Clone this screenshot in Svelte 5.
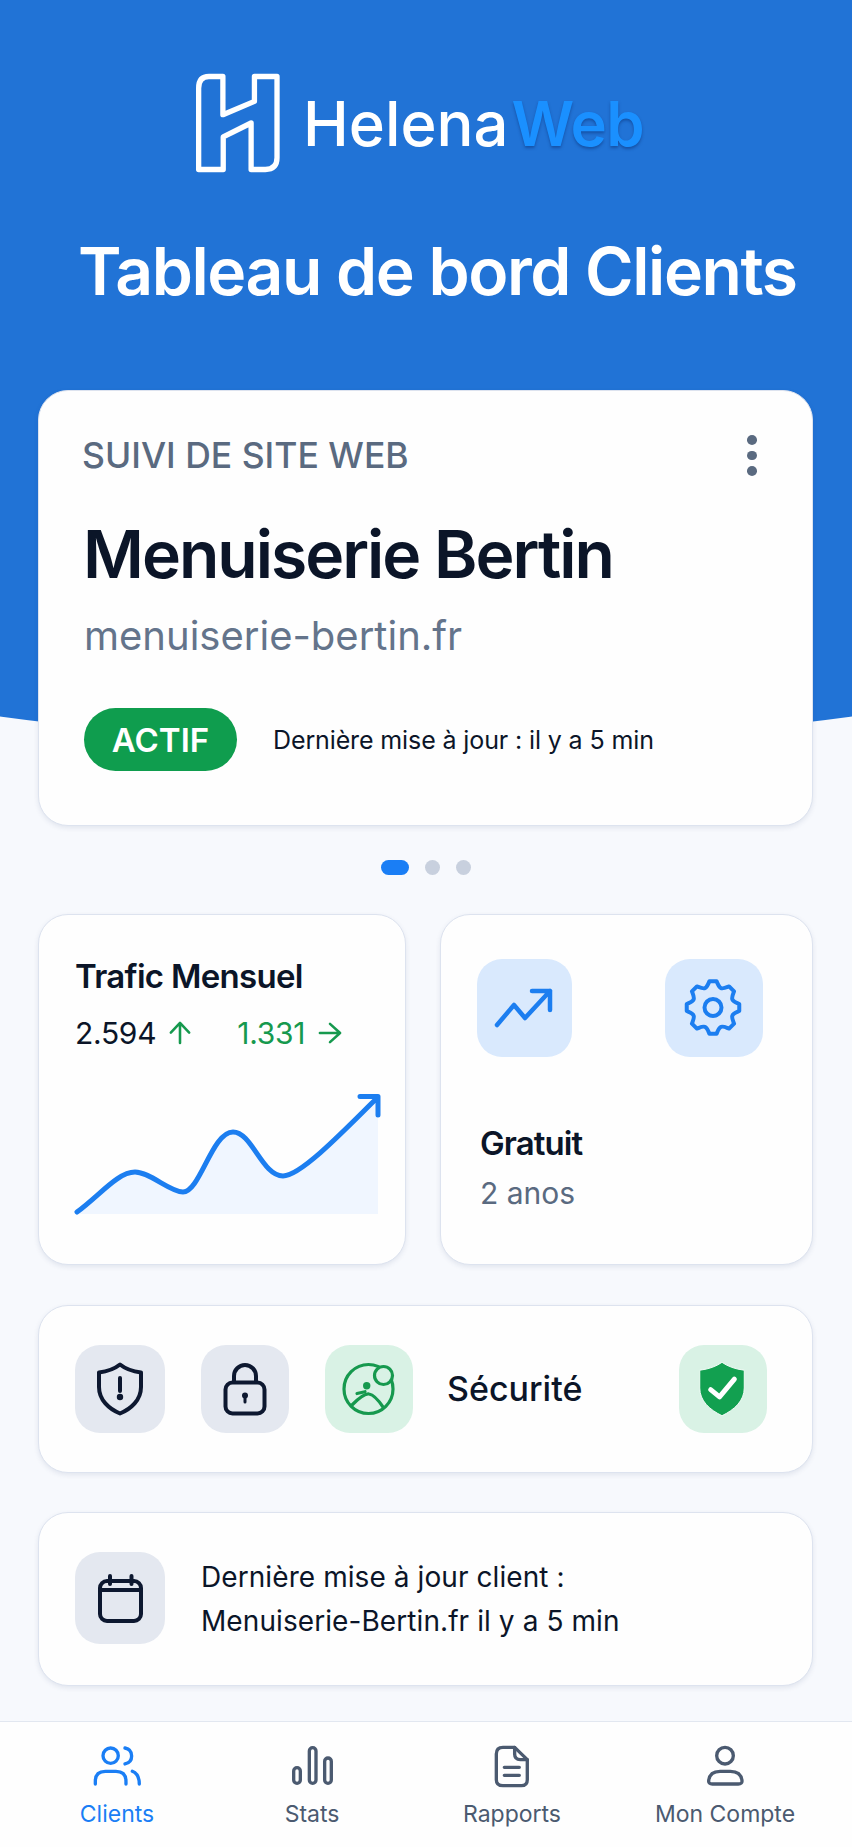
<script>
  function gearPath(cx, cy, n, rt, rr) {
    const pt = (a, r) => `${(cx + r * Math.sin(a)).toFixed(2)} ${(cy - r * Math.cos(a)).toFixed(2)}`;
    const s = (2 * Math.PI) / n;
    const hw = s * 0.17;
    let d = '';
    for (let i = 0; i < n; i++) {
      const a = i * s;
      const start = a - s / 2;
      d += i === 0 ? `M${pt(start, rr)} ` : '';
      d += `C${pt(start + s * 0.14, rr)} ${pt(a - hw - s * 0.07, rt - 2)} ${pt(a - hw, rt)} `;
      d += `L${pt(a + hw, rt)} `;
      d += `C${pt(a + hw + s * 0.07, rt - 2)} ${pt(a + s / 2 - s * 0.14, rr)} ${pt(a + s / 2, rr)} `;
    }
    return d + 'Z';
  }
  const gear = gearPath(48, 48.5, 8, 26.5, 21);
</script>

<div class="page">
  <header class="top">
    <div class="brand">
      <svg class="logo" viewBox="40 40 262 300" fill="none" stroke="#fff" stroke-width="16" stroke-linejoin="round">
        <path d="M85 50H127V165L222 125V50H290V295Q290 330 255 330H212V190L128 232V330H54V85Q54 50 85 50Z" />
      </svg>
      <div class="word"><span>Helena</span><span class="web">Web</span></div>
    </div>
    <h1>Tableau de bord Clients</h1>
  </header>

  <main>
    <section class="card hero">
      <div class="hero-head">
        <div class="kicker">SUIVI DE SITE WEB</div>
        <div class="kebab"><i></i><i></i><i></i></div>
      </div>
      <h2>Menuiserie Bertin</h2>
      <div class="url">menuiserie-bertin.fr</div>
      <div class="status">
        <span class="pill">ACTIF</span>
        <span class="when">Dernière mise à jour : il y a 5 min</span>
      </div>
    </section>

    <div class="pager"><i class="on"></i><i></i><i></i></div>

    <div class="duo">
      <section class="card traffic">
        <h3>Trafic Mensuel</h3>
        <div class="nums">
          <span class="num">2.594</span>
          <svg class="arrow up" viewBox="0 0 24 26" fill="none" stroke="#16994e" stroke-width="2.800" stroke-linecap="round" stroke-linejoin="round"><path d="M12 24V2M2 12.500 12 2l10 10.500" /></svg>
          <span class="num green">1.331</span>
          <svg class="arrow right" viewBox="0 0 26 24" fill="none" stroke="#16994e" stroke-width="2.800" stroke-linecap="round" stroke-linejoin="round"><path d="M2 12H24M13 2 24 12 13 22" /></svg>
        </div>
        <svg class="chart" viewBox="70 1090 320 130" fill="none">
          <path fill="#f0f6ff" d="M77 1212C100 1195 118 1172 135 1172C150 1172 170 1192 183 1192C200 1192 212 1132 233 1132C252 1132 262 1176 283 1176C300 1176 340 1135 378 1097V1214H80Z" />
          <path stroke="#1c7ef0" stroke-width="5" stroke-linecap="round" stroke-linejoin="round" d="M77 1212C100 1195 118 1172 135 1172C150 1172 170 1192 183 1192C200 1192 212 1132 233 1132C252 1132 262 1176 283 1176C300 1176 340 1135 377 1098M360 1096.500H378V1115" />
        </svg>
      </section>

      <section class="card plan">
        <div class="plan-icons">
          <div class="tile blue narrow">
            <svg viewBox="0 0 95 98" fill="none" stroke="#1c7ef0" stroke-width="4.500" stroke-linecap="round" stroke-linejoin="round"><path d="M20 66 37 46 48 59 73 32M55 32H73V51" /></svg>
          </div>
          <div class="tile blue wide">
            <svg viewBox="0 0 98 98" fill="none" stroke="#1c7ef0" stroke-width="4" stroke-linejoin="round">
              <path d={gear} />
              <circle cx="48" cy="48.500" r="8.500" />
            </svg>
          </div>
        </div>
        <div class="plan-name">Gratuit</div>
        <div class="plan-sub">2 anos</div>
      </section>
    </div>

    <section class="card security">
      <div class="tile grey sq first">
        <svg viewBox="0 0 90 88" fill="none" stroke="#0d1830" stroke-width="4" stroke-linecap="round" stroke-linejoin="round">
          <path d="M45 19.500C50 23.500 58 26.500 66 27.500V42C66 55 56 64 45 68.500C34 64 24 55 24 42V27.500C32 26.500 40 23.500 45 19.500Z" />
          <path d="M45 33V46" />
          <circle cx="45" cy="52" r="1.200" fill="#0d1830" />
        </svg>
      </div>
      <div class="tile grey sq">
        <svg viewBox="0 0 88 88" fill="none" stroke="#0d1830" stroke-width="4" stroke-linecap="round" stroke-linejoin="round">
          <rect x="24.500" y="37.500" width="39" height="31" rx="7" />
          <path d="M33 37V31a11 11 0 0 1 22 0V37" />
          <circle cx="44" cy="50.500" r="3" fill="#0d1830" stroke="none" />
          <path d="M44 52V57" stroke-width="3" />
        </svg>
      </div>
      <div class="tile green sq">
        <svg viewBox="0 0 88 88" fill="none" stroke="#16994e" stroke-width="3.200" stroke-linecap="round" stroke-linejoin="round">
          <circle cx="43.500" cy="44" r="24.500" />
          <circle cx="58.500" cy="30.500" r="9" fill="#d9f2e5" />
          <circle cx="41.700" cy="40.700" r="3.700" fill="#16994e" stroke="none" />
          <path d="M32 48.500 40 46.700" />
          <path d="M27 60Q39 48 44 49Q50 50 58 62" />
        </svg>
      </div>
      <div class="sec-label">Sécurité</div>
      <div class="tile green sq end">
        <svg viewBox="0 0 89 88">
          <path fill="#12a050" stroke="#f2fbf6" stroke-width="1" d="M43.500 17C49 21 57 24 66 25V43C66 56 56 65 43.500 71C31 65 21 56 21 43V25C30 24 38 21 43.500 17Z" />
          <path fill="none" stroke="#fff" stroke-width="5" stroke-linecap="round" stroke-linejoin="round" d="M32 44.700 41 52 56 34" />
        </svg>
      </div>
    </section>

    <section class="card latest">
      <div class="tile grey cal">
        <svg viewBox="0 0 90 92" fill="none" stroke="#0d1830" stroke-width="4" stroke-linecap="round" stroke-linejoin="round">
          <rect x="25" y="29" width="41" height="40" rx="7" />
          <path d="M25 38H66M35 24V32M56.500 24V32" />
        </svg>
      </div>
      <p>Dernière mise à jour client :<br />Menuiserie-Bertin.fr il y a 5 min</p>
    </section>
  </main>

  <nav>
    <div class="tab active">
      <div class="ic"><svg width="53.300" height="43.300" viewBox="30 30 160 130" fill="none" stroke="currentColor" stroke-width="10" stroke-linecap="round">
        <circle cx="92" cy="65" r="23" />
        <path d="M135 42Q155 46 155 66T135 90M46 150V142Q46 112 76 112H108Q138 112 138 142V150M157 112Q178 120 178 150" />
      </svg></div>
      <span>Clients</span>
    </div>
    <div class="tab">
      <div class="ic"><svg width="45" height="43.300" viewBox="630 30 135 130" fill="none" stroke="currentColor" stroke-width="10">
        <rect x="641" y="101" width="20" height="47" rx="10" />
        <rect x="688" y="41" width="20" height="107" rx="10" />
        <rect x="734" y="72" width="20" height="76" rx="10" />
      </svg></div>
      <span>Stats</span>
    </div>
    <div class="tab">
      <div class="ic"><svg width="38.300" height="45" viewBox="70 28 115 135" fill="none" stroke="currentColor" stroke-width="10" stroke-linecap="round" stroke-linejoin="round">
        <path d="M100 38H135L173 75V135Q173 153 155 153H100Q80 153 80 135V58Q80 38 100 38Z" />
        <path d="M135 38V58Q135 75 152 75H173M104 98H149M104 122H149" />
      </svg></div>
      <span>Rapports</span>
    </div>
    <div class="tab">
      <div class="ic"><svg width="40.700" height="43.300" viewBox="700 30 122 130" fill="none" stroke="currentColor" stroke-width="10" stroke-linejoin="round">
        <circle cx="760" cy="65" r="25" />
        <path d="M711 140Q714 112 745 112H776Q808 112 811 140Q812 150 800 150H722Q710 150 711 140Z" />
      </svg></div>
      <span>Mon Compte</span>
    </div>
  </nav>
</div>

<style>
  :global(body) { margin: 0; background: #f7f9fd; }
  .page {
    width: 852px;
    height: 1847px;
    overflow: hidden;
    background: #f7f9fd;
    font-family: Inter, "Liberation Sans", sans-serif;
    color: #0b1528;
  }
  .top {
    position: relative;
    height: 390px;
    background: #2173d6;
  }
  .top::after {
    content: '';
    position: absolute;
    left: -174px;
    top: 0;
    width: 1200px;
    height: 741px;
    border-radius: 0 0 600px 600px / 0 0 83px 83px;
    background: #2173d6;
  }
  .brand {
    position: relative;
    z-index: 1;
    display: flex;
    align-items: flex-start;
    padding: 73px 0 0 194px;
    gap: 22px;
    height: 100px;
  }
  .logo { width: 87px; height: 100px; display: block; }
  .word {
    margin-top: 16px;
    font-size: 61.500px;
    line-height: 70px;
    font-weight: 500;
    color: #fff;
  }
  .web { color: #1a90ff; margin-left: 3px; font-weight: 600; letter-spacing: -0.600px; text-shadow: 0 2px 3px rgba(10, 50, 120, 0.5); }
  h1 {
    position: relative;
    z-index: 1;
    margin: 0;
    padding: 60px 0 0 78px;
    font-size: 66px;
    line-height: 76px;
    font-weight: 600;
    letter-spacing: -1.460px;
    color: #fff;
    white-space: nowrap;
  }
  main {
    position: relative;
    z-index: 2;
    padding: 0 39px 0 38px;
  }
  .card {
    box-sizing: border-box;
    background: #fefefe;
    border: 1px solid #dde3ef;
    border-radius: 30px;
    box-shadow: 0 2px 5px rgba(40, 60, 110, 0.1);
  }
  .hero {
    height: 436px;
    padding: 45px 44px 0 45px;
  }
  .hero-head { display: flex; justify-content: space-between; height: 40px; }
  .kicker { margin-left: -2px; font-size: 35.500px; line-height: 40px; font-weight: 500; color: #5a6a80; white-space: nowrap; }
  .kebab { display: flex; flex-direction: column; gap: 6px; margin: -1px 11px 0 0; }
  .kebab i { display: block; width: 10px; height: 10.500px; border-radius: 50%; background: #5a6a80; }
  h2 { margin: 38px 0 0 -1px; font-size: 66px; line-height: 80px; font-weight: 600; letter-spacing: -2px; color: #0b1528; white-space: nowrap; }
  .url { margin-top: 17px; font-size: 40px; line-height: 50px; color: #64748b; }
  .status { display: flex; align-items: center; gap: 36px; margin-top: 47px; }
  .pill {
    box-sizing: border-box;
    width: 153px;
    height: 63px;
    border-radius: 32px;
    background: #0f9d4e;
    color: #fff;
    font-size: 33px;
    font-weight: 600;
    display: flex;
    align-items: center;
    justify-content: center;
  }
  .when { font-size: 25px; line-height: 36px; letter-spacing: -0.120px; color: #0b1528; white-space: nowrap; }
  .pager { display: flex; justify-content: center; align-items: center; gap: 16px; margin-top: 34px; height: 15px; }
  .pager i { display: block; width: 15px; height: 15px; border-radius: 50%; background: #c8d0de; }
  .pager i.on { width: 28px; border-radius: 8px; background: #1a7ef5; }
  .duo { display: grid; grid-template-columns: 368px 373px; gap: 34px; margin-top: 39px; }
  .duo .card { height: 351px; }
  .traffic { padding: 40px 0 0 36px; }
  h3 { margin: 0; font-size: 33px; line-height: 42px; font-weight: 600; letter-spacing: -0.700px; white-space: nowrap; }
  .nums { display: flex; align-items: center; margin-top: 16px; height: 40px; }
  .num { font-size: 30px; line-height: 40px; letter-spacing: -0.300px; }
  .green { color: #16994e; }
  .arrow { display: block; flex: none; }
  .arrow.up { width: 22px; height: 24px; margin-left: 13px; margin-right: 46px; }
  .arrow.right { width: 24px; height: 22px; margin-left: 13px; }
  .chart { display: block; width: 320px; height: 130px; margin: 37px 0 0 -5px; }
  .plan { padding: 44px 49px 0 36px; }
  .plan-icons { display: flex; justify-content: space-between; }
  .tile { flex: none; border-radius: 25px; }
  .tile svg { display: block; width: 100%; height: 100%; }
  .blue { background: #d9e9fd; height: 98px; }
  .narrow { width: 95px; }
  .wide { width: 98px; }
  .plan-name { margin: 65px 0 0 3px; font-size: 33px; line-height: 42px; font-weight: 600; letter-spacing: -0.900px; }
  .plan-sub { margin: 9px 0 0 3px; font-size: 30px; line-height: 40px; color: #5a6a80; }
  .security {
    display: flex;
    align-items: center;
    gap: 36px;
    height: 168px;
    margin-top: 40px;
    padding: 0 45px 0 36px;
  }
  .grey { background: #e4e8f0; }
  .tile.green { background: #d9f2e5; }
  .sq { width: 88px; height: 88px; }
  .sq.first { width: 90px; }
  .sec-label { font-size: 34px; line-height: 42px; font-weight: 500; margin-left: -2px; }
  .end { margin-left: auto; }
  .latest {
    display: flex;
    align-items: center;
    gap: 36px;
    height: 174px;
    margin-top: 39px;
    padding-left: 36px;
  }
  .cal { width: 90px; height: 92px; margin-bottom: 3px; }
  .latest p { margin: 0; font-size: 28px; line-height: 44px; letter-spacing: 0.080px; white-space: nowrap; }
  nav {
    position: relative;
    z-index: 2;
    display: grid;
    grid-template-columns: 234px 156px 244px 182px;
    height: 126px;
    box-sizing: border-box;
    margin-top: 35px;
    padding-top: 21px;
    border-top: 1px solid #e2e7f0;
    background: #fefefe;
  }
  .tab { display: flex; flex-direction: column; align-items: center; color: #4b5a70; font-size: 23px; line-height: 30px; white-space: nowrap; }
  .tab.active { color: #1a7ef5; }
  .ic { height: 46px; display: flex; align-items: center; justify-content: center; margin-bottom: 10px; }
  .ic svg { display: block; }
</style>
